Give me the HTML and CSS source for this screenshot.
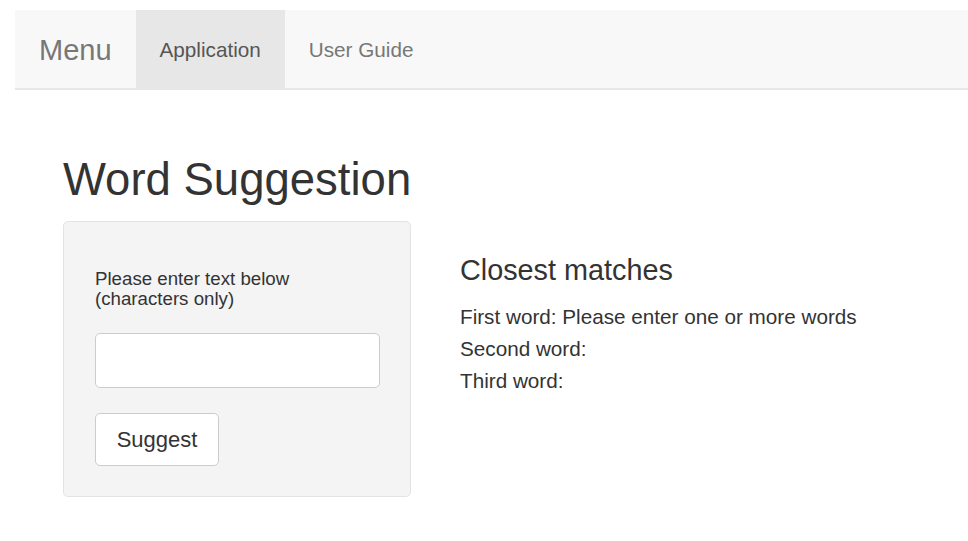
FILE: index.html
```html
<!DOCTYPE html>
<html>
<head>
<meta charset="utf-8">
<link rel="stylesheet" href="styles.css">
</head>
<body>
<nav class="navbar">
  <span class="brand">Menu</span>
  <a class="nav-link active">Application</a>
  <a class="nav-link">User Guide</a>
</nav>
<main class="content">
  <h1 class="title">Word Suggestion</h1>
  <div class="row">
    <div class="well">
      <label class="label" for="txt">Please enter text below<br>(characters only)</label>
      <input class="text-input" id="txt" type="text">
      <button class="btn">Suggest</button>
    </div>
    <div class="results">
      <h3 class="results-title">Closest matches</h3>
      <div class="line">First word: Please enter one or more words</div>
      <div class="line">Second word:</div>
      <div class="line">Third word:</div>
    </div>
  </div>
</main>
</body>
</html>
```
FILE: styles.css
```css
html, body {
  margin: 0;
  padding: 0;
  background: #fff;
}
body {
  padding: 10px 0 0 15px;
  font-family: "Liberation Sans", Arial, sans-serif;
  color: #333;
}
.navbar {
  display: flex;
  height: 78px;
  background: #f8f8f8;
  border-bottom: 2px solid #e7e7e7;
}
.brand {
  padding: 3px 24px 0 24px;
  font-size: 29px;
  line-height: 75px;
  color: #777;
}
.nav-link {
  padding: 3px 24px 0 24px;
  font-size: 20.7px;
  line-height: 74px;
  height: 76px;
  color: #777;
  text-decoration: none;
}
.nav-link.active {
  background: #e7e7e7;
  color: #555;
}
.content {
  padding-left: 48px;
}
.title {
  margin: 65px 0 16px 0;
  font-size: 45.5px;
  line-height: 50px;
  font-weight: normal;
  color: #333;
}
.row {
  display: flex;
  align-items: flex-start;
  gap: 49px;
}
.well {
  box-sizing: border-box;
  width: 348px;
  height: 276px;
  padding: 47px 31px 0 31px;
  background: #f4f4f4;
  border: 1.5px solid #e3e3e3;
  border-radius: 5px;
  display: flex;
  flex-direction: column;
  align-items: flex-start;
}
.label {
  font-size: 18.7px;
  line-height: 19.5px;
  color: #333;
}
.text-input {
  box-sizing: border-box;
  margin-top: 25px;
  width: 285px;
  height: 55px;
  border: 1.5px solid #ccc;
  border-radius: 5px;
  background: #fff;
  font-size: 20px;
  padding: 0 12px;
  font-family: inherit;
}
.btn {
  box-sizing: border-box;
  margin-top: 25px;
  width: 124px;
  height: 53px;
  border: 1.5px solid #ccc;
  border-radius: 5px;
  background: #fff;
  color: #333;
  font-family: inherit;
  font-size: 22px;
  padding: 0;
}
.results {
  padding-top: 32px;
}
.results-title {
  margin: 0 0 14px 0;
  font-size: 28.8px;
  line-height: 34px;
  font-weight: normal;
  color: #333;
}
.line {
  font-size: 20.7px;
  line-height: 31.8px;
  color: #333;
}
```
